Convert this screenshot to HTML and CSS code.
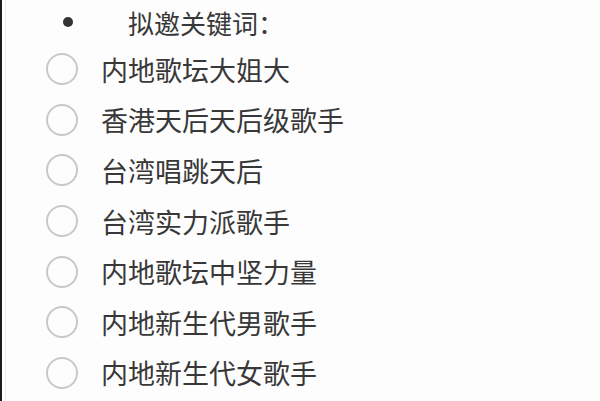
FILE: index.html
```html
<!DOCTYPE html>
<html lang="zh-CN">
<head>
  <meta charset="UTF-8"/>
  <title>拟邀关键词</title>
  <link rel="stylesheet" href="styles.css">
</head>
<body>
<div class="panel">
  <div class="panel-inner">
    <div class="list-title">
      <span class="dot"></span>
      <span class="title-text">拟邀关键词：</span>
    </div>
    <ul class="options">
      <li class="option"><span class="radio"></span>内地歌坛大姐大</li>
      <li class="option"><span class="radio"></span>香港天后天后级歌手</li>
      <li class="option"><span class="radio"></span>台湾唱跳天后</li>
      <li class="option"><span class="radio"></span>台湾实力派歌手</li>
      <li class="option"><span class="radio"></span>内地歌坛中坚力量</li>
      <li class="option"><span class="radio"></span>内地新生代男歌手</li>
      <li class="option"><span class="radio"></span>内地新生代女歌手</li>
    </ul>
  </div>
</div>
</body>
</html>
```

FILE: styles.css
```css
body {
    margin: 0;
    background: #fff;
    font-family: "Noto Sans CJK SC", "Noto Sans", sans-serif;
    color: #383838;
}
.panel {
    height: 401px;
    border-left: 2px solid #1c1c1c;
    overflow: hidden;
}
.panel-inner {
    height: 100%;
    margin-left: 3px;
    border-left: 1px solid #ececec;
    background: #fdfdfd;
}
.list-title {
    display: flex;
    align-items: center;
    height: 44px;
    font-size: 26px;
}
.dot {
    width: 10px;
    height: 10px;
    border-radius: 50%;
    background: #333;
    margin-left: 57px;
}
.title-text {
    margin-left: 55px;
}
.options {
    list-style: none;
    margin: 0;
    padding: 0;
}
.option {
    display: flex;
    align-items: center;
    height: 50.6px;
    font-size: 27px;
}
.radio {
    box-sizing: border-box;
    width: 32px;
    height: 32px;
    border: 2px solid #c8c8c8;
    border-radius: 50%;
    margin-left: 40px;
    margin-right: 23px;
}
```
